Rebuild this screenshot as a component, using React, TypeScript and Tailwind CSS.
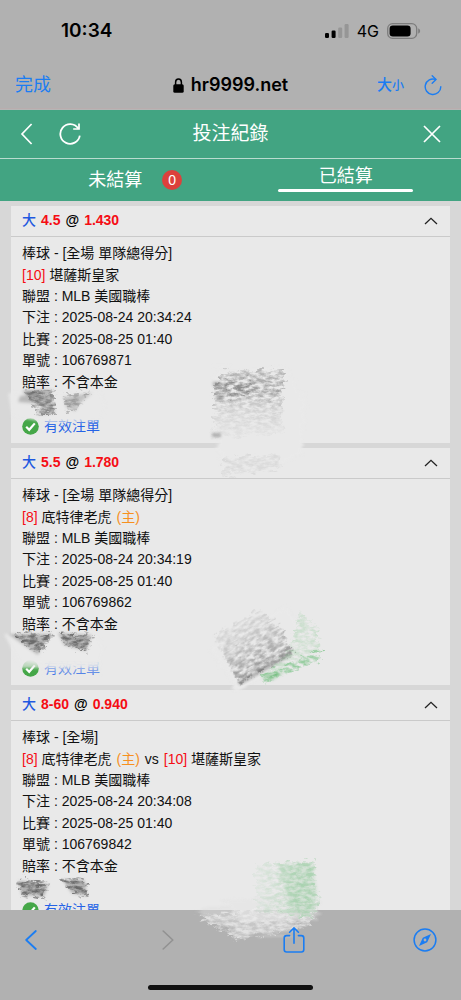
import React from "react";

type Team = { rank: number; name: string; home?: boolean };
type Bet = {
  line: string;
  odds: string;
  market: string;
  teams: Team[];
  placed: string;
  match: string;
  ticket: string;
};

const bets: Bet[] = [
  {
    line: "4.5",
    odds: "1.430",
    market: "棒球 - [全場 單隊總得分]",
    teams: [{ rank: 10, name: "堪薩斯皇家" }],
    placed: "2025-08-24 20:34:24",
    match: "2025-08-25 01:40",
    ticket: "106769871",
  },
  {
    line: "5.5",
    odds: "1.780",
    market: "棒球 - [全場 單隊總得分]",
    teams: [{ rank: 8, name: "底特律老虎", home: true }],
    placed: "2025-08-24 20:34:19",
    match: "2025-08-25 01:40",
    ticket: "106769862",
  },
  {
    line: "8-60",
    odds: "0.940",
    market: "棒球 - [全場]",
    teams: [
      { rank: 8, name: "底特律老虎", home: true },
      { rank: 10, name: "堪薩斯皇家" },
    ],
    placed: "2025-08-24 20:34:08",
    match: "2025-08-25 01:40",
    ticket: "106769842",
  },
];

function StatusBar() {
  return (
    <div className="flex h-[62px] shrink-0 items-center justify-between pl-[61px] pr-10">
      <span className="text-[19px] font-semibold leading-6">10:34</span>
      <div className="flex items-center gap-2">
        <svg width="24" height="15" viewBox="0 0 24 15" aria-hidden="true">
          <rect x="0" y="9" width="4" height="5" rx="1.2" fill="#000" />
          <rect x="6.6" y="6.5" width="4" height="7.5" rx="1.2" fill="#000" />
          <rect x="13.2" y="3.5" width="4" height="10.5" rx="1.2" fill="#969696" />
          <rect x="19.6" y="0" width="4" height="14" rx="1.2" fill="#969696" />
        </svg>
        <span className="text-[16px] leading-5">4G</span>
        <svg width="34" height="16" viewBox="0 0 34 16" aria-hidden="true">
          <rect x="0.7" y="0.7" width="29" height="14.6" rx="4.8" fill="none" stroke="#7d7d7d" strokeWidth="1.3" />
          <rect x="2.6" y="2.6" width="21" height="10.8" rx="3.2" fill="#000" />
          <path d="M31.2 5.2 Q33.2 6.2 33.2 8 Q33.2 9.8 31.2 10.8 Z" fill="#7d7d7d" />
        </svg>
      </div>
    </div>
  );
}

function AddressBar() {
  return (
    <div className="grid h-[46px] shrink-0 grid-cols-[1fr_auto_1fr] items-center px-[15px] text-[#1b7df2]">
      <button className="justify-self-start text-[18px] leading-6">完成</button>
      <div className="flex items-center gap-[7px] text-black">
        <svg width="11" height="15" viewBox="0 0 11 15" aria-hidden="true">
          <path d="M2.6 7 V4.3 a2.9 3.3 0 0 1 5.8 0 V7" fill="none" stroke="#000" strokeWidth="1.5" />
          <rect x="0.3" y="6.2" width="10.4" height="8.6" rx="1.6" fill="#000" />
        </svg>
        <span className="text-[18px] font-semibold leading-6">hr9999.net</span>
      </div>
      <div className="flex items-center gap-5 justify-self-end pr-1">
        <button className="flex items-baseline font-medium leading-6" aria-label="文字大小">
          <span className="text-[15px]">大</span>
          <span className="text-[12px]">小</span>
        </button>
        <button aria-label="重新載入">
          <svg width="18" height="21" viewBox="0 0 18 21" fill="none" stroke="currentColor" strokeWidth="1.4" strokeLinecap="round" strokeLinejoin="round" aria-hidden="true">
            <path d="M11.6 4.4 A7.8 7.8 0 1 0 16.8 11.8" />
            <path d="M8.2 0.8 L12 4.5 L8.2 8.2" />
          </svg>
        </button>
      </div>
    </div>
  );
}

function PageHeader() {
  return (
    <header className="shrink-0 bg-[#42a482] text-white">
      <div className="grid h-12 grid-cols-[1fr_auto_1fr] items-center px-5">
        <div className="flex items-center gap-[26px]">
          <button aria-label="返回">
            <svg width="13" height="22" viewBox="0 0 13 22" fill="none" stroke="currentColor" strokeWidth="1.7" aria-hidden="true">
              <path d="M11.6 1 L2 11 L11.6 21" />
            </svg>
          </button>
          <button aria-label="重新整理">
            <svg width="22" height="22" viewBox="0 0 22 22" fill="none" stroke="currentColor" strokeWidth="1.8" aria-hidden="true">
              <path d="M19.2 5.4 A9.8 9.8 0 1 0 20.8 12.6" />
              <path d="M20 0.6 V6 H14.2" strokeWidth="1.7" />
            </svg>
          </button>
        </div>
        <h1 className="text-[19px] leading-6">投注紀錄</h1>
        <button className="justify-self-end" aria-label="關閉">
          <svg width="18" height="18" viewBox="0 0 18 18" fill="none" stroke="currentColor" strokeWidth="1.7" aria-hidden="true">
            <path d="M1 1 L17 17 M17 1 L1 17" />
          </svg>
        </button>
      </div>
      <nav className="grid h-[43px] grid-cols-2 border-t border-[#b9dccf] text-[18px] leading-6">
        <button className="flex items-center justify-center">
          <span className="relative">
            未結算
            <span className="absolute left-full top-1/2 ml-5 flex h-5 w-5 -translate-y-1/2 items-center justify-center rounded-full bg-[#dc413c] text-[14px] leading-5">
              0
            </span>
          </span>
        </button>
        <button className="flex flex-col items-center pt-[5px]">
          已結算
          <span className="mt-px h-[3px] w-[135px] rounded-sm bg-white" />
        </button>
      </nav>
    </header>
  );
}

function BetCard({ bet }: { bet: Bet }) {
  return (
    <article className="mx-[11px] mb-[5px] bg-[#e9e9e9] text-[14px] leading-[21px] text-[#111]">
      <button className="flex h-[31px] w-full items-center justify-between border-b border-[#cacaca] pb-px pl-[11px] pr-3 font-bold text-[#f50d14]">
        <span className="flex gap-[5px]">
          <span className="font-medium text-[#1f58e0]">大</span>
          <span>{bet.line}</span>
          <span className="text-black">@</span>
          <span>{bet.odds}</span>
        </span>
        <svg width="14" height="8" viewBox="0 0 14 8" fill="none" stroke="#222" strokeWidth="1.3" aria-hidden="true">
          <path d="M1 7 L7 1.3 L13 7" />
        </svg>
      </button>
      <div className="px-[11px] py-[6px]">
        <div className="grid h-[150px] auto-rows-fr items-center">
          <p>{bet.market}</p>
          <p className="flex gap-[5px]">
            {bet.teams.map((team, i) => (
              <React.Fragment key={team.rank}>
                {i > 0 && <span>vs</span>}
                <span>
                  <span className="text-[#f50d14]">[{team.rank}]</span> {team.name}
                </span>
                {team.home && <span className="text-[#f7901e]">(主)</span>}
              </React.Fragment>
            ))}
          </p>
          <p>聯盟 : MLB 美國職棒</p>
          <p>下注 : {bet.placed}</p>
          <p>比賽 : {bet.match}</p>
          <p>單號 : {bet.ticket}</p>
          <p>賠率 : 不含本金</p>
        </div>
        <p className="mt-[23px] flex items-center gap-[5px] text-[#2563e6]">
          <svg width="17" height="17" viewBox="0 0 17 17" aria-hidden="true">
            <circle cx="8.5" cy="8.5" r="8.3" fill="#45a748" />
            <path d="M4.2 8.8 L7.2 11.8 L12.8 5.4" fill="none" stroke="#fff" strokeWidth="2.2" />
          </svg>
          有效注單
        </p>
      </div>
    </article>
  );
}

function Toolbar() {
  return (
    <footer className="shrink-0 bg-[#b1b1b1] text-[#1b7df2]">
      <div className="relative z-10 flex h-[59px] items-center justify-between pl-[19px] pr-6">
        <button className="flex w-6 justify-center" aria-label="上一頁">
          <svg width="12" height="20" viewBox="0 0 12 20" fill="none" stroke="currentColor" strokeWidth="1.8" strokeLinecap="round" strokeLinejoin="round" aria-hidden="true">
            <path d="M10.8 1 L1.2 10 L10.8 19" />
          </svg>
        </button>
        <button className="flex w-6 justify-end text-[#929292]" aria-label="下一頁">
          <svg width="12" height="20" viewBox="0 0 12 20" fill="none" stroke="currentColor" strokeWidth="1.6" strokeLinecap="round" strokeLinejoin="round" aria-hidden="true">
            <path d="M1.2 1 L10.8 10 L1.2 19" />
          </svg>
        </button>
        <button className="flex w-6 justify-center" aria-label="分享">
          <svg width="22" height="26" viewBox="0 0 22 26" fill="none" stroke="currentColor" strokeWidth="1.6" strokeLinecap="round" strokeLinejoin="round" aria-hidden="true">
            <path d="M6.6 8.6 H3.6 Q1.2 8.6 1.2 11 V22.6 Q1.2 25 3.6 25 H18.4 Q20.8 25 20.8 22.6 V11 Q20.8 8.6 18.4 8.6 H15.4" />
            <path d="M11 16.2 V1.2 M6.6 5.2 L11 0.9 L15.4 5.2" />
          </svg>
        </button>
        <button className="flex w-6 justify-center" aria-label="在 Safari 中開啟">
          <svg width="24" height="24" viewBox="0 0 24 24" aria-hidden="true">
            <circle cx="12" cy="12" r="10.9" fill="none" stroke="currentColor" strokeWidth="1.5" />
            <path d="M18 6 L14.2 14.2 L6 18 L9.8 9.8 Z" fill="currentColor" />
            <circle cx="12" cy="12" r="1.4" fill="#b1b1b1" />
          </svg>
        </button>
      </div>
      <div className="flex h-[31px] justify-center pt-4">
        <div className="h-[5px] w-[165px] rounded-full bg-[#111]" />
      </div>
    </footer>
  );
}

function Scribbles() {
  return (
    <svg className="pointer-events-none absolute left-0 top-0 h-full w-full" aria-hidden="true">
      <defs>
        <filter id="chalk" x="-20%" y="-20%" width="140%" height="140%">
          <feTurbulence type="fractalNoise" baseFrequency="0.14 0.3" numOctaves="4" seed="8" result="n" />
          <feColorMatrix in="n" values="0 0 0 0 0  0 0 0 0 0  0 0 0 0 0  2.6 0 0 0 -0.8" result="a" />
          <feDisplacementMap in="SourceGraphic" in2="n" scale="14" xChannelSelector="G" yChannelSelector="B" result="d" />
          <feComposite in="d" in2="a" operator="in" />
          <feGaussianBlur stdDeviation="0.7" />
        </filter>
        <filter id="rough" x="-20%" y="-20%" width="140%" height="140%">
          <feTurbulence type="fractalNoise" baseFrequency="0.03 0.25" numOctaves="2" seed="3" result="n" />
          <feDisplacementMap in="SourceGraphic" in2="n" scale="16" xChannelSelector="R" yChannelSelector="G" />
          <feGaussianBlur stdDeviation="0.8" />
        </filter>
        <filter id="soft" x="-30%" y="-30%" width="160%" height="160%">
          <feGaussianBlur stdDeviation="1.8" />
        </filter>
        <linearGradient id="fadeDown" x1="0" y1="0" x2="0" y2="1">
          <stop offset="0" stopColor="#555" stopOpacity="0.3" />
          <stop offset="0.3" stopColor="#444" stopOpacity="0.45" />
          <stop offset="0.55" stopColor="#666" stopOpacity="0.2" />
          <stop offset="1" stopColor="#777" stopOpacity="0.05" />
        </linearGradient>
        <linearGradient id="fadeUp" x1="0" y1="0" x2="0" y2="1">
          <stop offset="0" stopColor="#777" stopOpacity="0.15" />
          <stop offset="1" stopColor="#444" stopOpacity="0.5" />
        </linearGradient>
        <linearGradient id="leaf" x1="0" y1="0" x2="1" y2="0">
          <stop offset="0" stopColor="#6cc07a" stopOpacity="0.08" />
          <stop offset="0.7" stopColor="#5cb66c" stopOpacity="0.35" />
          <stop offset="1" stopColor="#5cb66c" stopOpacity="0.3" />
        </linearGradient>
      </defs>

      <g filter="url(#soft)">
        <path d="M8 393 L100 392 L106 408 L98 421 L50 423 L12 416 Z" fill="#e9e9e9" opacity="0.85" />
        <path d="M22 391 L54 390 L30 397 Z" fill="#555" opacity="0.6" />
        <path d="M20 396 L50 392 L55 413 L38 415 L42 404 L18 402 Z" fill="#888" opacity="0.5" />
        <path d="M64 397 L92 393 L80 403 L75 411 L66 407 Z" fill="#999" opacity="0.5" />
      </g>
      <g filter="url(#chalk)">
        <path d="M24 391 L54 391 L55 415 L38 415 Z" fill="#444" opacity="0.5" />
        <path d="M62 395 L90 392 L76 410 L66 411 Z" fill="#666" opacity="0.4" />
      </g>

      <g filter="url(#soft)">
        <path d="M4 634 L96 632 L104 650 L99 665 L60 667 L18 661 Z" fill="#e9e9e9" opacity="0.92" />
        <path d="M8 634 L52 634 L42 646 L38 655 L24 645 Z" fill="#777" opacity="0.45" />
        <path d="M58 633 L92 635 L86 651 L64 645 Z" fill="#777" opacity="0.45" />
        <path d="M20 660 H100 V668 H20 Z" fill="#e9e9e9" opacity="0.75" />
        <path d="M44 660 H100 V674 H44 Z" fill="#e9e9e9" opacity="0.4" />
      </g>
      <g filter="url(#chalk)">
        <path d="M12 633 L54 634 L40 654 L26 646 Z M60 633 L92 635 L88 652 L64 644 Z" fill="#222" opacity="0.5" />
      </g>

      <g filter="url(#soft)">
        <path d="M19 881 L48 884 L44 896 L22 895 Z M63 880 L84 880 L87 896 L72 893 Z" fill="#888" opacity="0.6" />
      </g>
      <g filter="url(#chalk)">
        <path d="M18 878 L48 884 L44 898 L22 896 Z M62 879 L84 880 L88 897 L74 894 Z" fill="#222" opacity="0.5" />
      </g>

      <path d="M214 370 L285 368 L306 400 L302 452 L282 466 L222 474 L216 440 Z" fill="#e9e9e9" filter="url(#rough)" />
      <path d="M222 458 L282 454 L280 468 L222 476 Z" fill="#d4d4d4" opacity="0.7" filter="url(#chalk)" />
      <path d="M222 372 L284 369 L282 420 L285 432 L214 438 L214 384 Z" fill="url(#fadeDown)" filter="url(#chalk)" />
      <path d="M226 380 L252 378 L248 396 L228 400 Z" fill="#555" opacity="0.25" filter="url(#chalk)" />
      <path d="M213 382 h8 v4 h-8 Z M216 394 h7 v6 h-7 Z M212 433 h9 v4 h-9 Z" fill="#444" opacity="0.35" filter="url(#soft)" />

      <g transform="rotate(-28 252 642)">
        <path d="M212 628 H300 V676 H216 Z" fill="#e9e9e9" filter="url(#rough)" />
        <path d="M222 618 H272 L284 640 V672 H220 Z" fill="url(#fadeUp)" filter="url(#chalk)" />
        <path d="M221 671 L281 669 V672 L221 674 Z" fill="#444" opacity="0.45" filter="url(#soft)" />
      </g>
      <path d="M262 677 L290 650 L300 610 L318 630 L320 657 L264 682 Z" fill="#6abf76" opacity="0.22" filter="url(#chalk)" />
      <path d="M263 676 L319 650 L320 660 L264 683 Z" fill="#4eb45f" opacity="0.4" filter="url(#chalk)" />
      <path d="M262 678 L272 680 L284 672 L264 674 Z" fill="#3fa850" opacity="0.4" filter="url(#soft)" />

      <path d="M196 912 L220 904 L260 898 L318 903 L318 918 L296 920 L296 932 L238 941 L232 928 L216 924 Z" fill="#dfdfdf" opacity="0.45" filter="url(#rough)" />
      <path d="M226 900 L318 898 L310 918 L240 922 Z" fill="#e8e8e8" opacity="0.6" filter="url(#soft)" />
      <path d="M196 914 L318 908 L310 926 L236 940 Z" fill="#eee" opacity="0.7" filter="url(#chalk)" />
      <path d="M256 864 L316 861 L314 884 L320 898 L312 918 L286 916 L256 910 Z" fill="url(#leaf)" filter="url(#chalk)" />
      <path d="M280 866 L312 864 L317 892 L308 916 L292 912 Z" fill="#6fbd7b" opacity="0.18" filter="url(#soft)" />
    </svg>
  );
}

export default function App() {
  return (
    <div className="relative flex h-screen flex-col overflow-hidden bg-[#b1b1b1] font-['Inter','Noto_Sans_CJK_TC',sans-serif] text-black">
      <StatusBar />
      <AddressBar />
      <div className="h-[2px] shrink-0 border-t border-[#b9adae] bg-[#b6b6b6]" />
      <div className="flex min-h-0 flex-1 flex-col font-['Liberation_Sans','Noto_Sans_CJK_TC',sans-serif]">
        <PageHeader />
        <main className="min-h-0 flex-1 overflow-y-auto bg-[#d7d7d7] pt-[5px] [scrollbar-width:none]">
          {bets.map((bet) => (
            <BetCard key={bet.ticket} bet={bet} />
          ))}
        </main>
      </div>
      <Toolbar />
      <Scribbles />
    </div>
  );
}
